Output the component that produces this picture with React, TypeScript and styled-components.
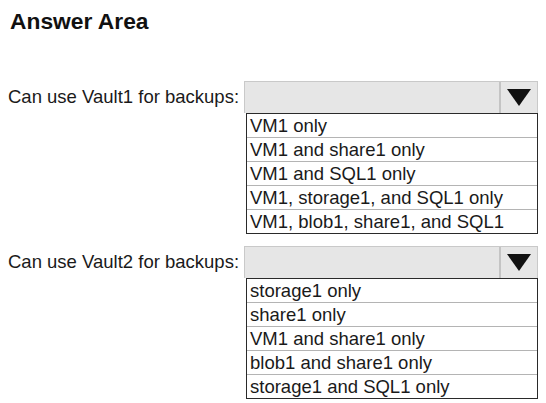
import React from "react";
import styled, { createGlobalStyle } from "styled-components";

const Global = createGlobalStyle`
  html, body { margin: 0; padding: 0; background: #ffffff; }
  body { font-family: "Liberation Sans", Arial, sans-serif; color: #1a1a1a; }
`;

const Page = styled.div`
  width: 546px;
  height: 403px;
  padding: 8px 0 0 8px;
  box-sizing: border-box;
  overflow: hidden;
`;

const Title = styled.h1`
  margin: 0 0 0 2px;
  font-size: 22.8px;
  line-height: 26px;
  font-weight: 700;
  color: #111;
`;

const Questions = styled.div`
  display: flex;
  flex-direction: column;
  gap: 12px;
  margin-top: 47px;
`;

const Row = styled.div`
  display: grid;
  grid-template-columns: 236px 294px;
  align-items: start;
`;

const Label = styled.div`
  height: 32px;
  display: flex;
  align-items: center;
  font-size: 18.5px;
  white-space: nowrap;
`;

const Dropdown = styled.div`
  display: flex;
  flex-direction: column;
`;

const Select = styled.div`
  height: 32px;
  box-sizing: border-box;
  display: flex;
  background: #e6e6e6;
  border: 1px solid #c9c9c9;
  border-bottom: none;
`;

const SelectValue = styled.div`
  flex: 1;
`;

const ArrowButton = styled.div`
  width: 36px;
  border-left: 2px solid #c4c4c4;
  display: flex;
  align-items: center;
  justify-content: center;
`;

const List = styled.div`
  margin-left: 2px;
  border: 1px solid #2a2a2a;
  display: flex;
  flex-direction: column;
`;

const Option = styled.div`
  height: 23px;
  line-height: 24px;
  padding-left: 3px;
  font-size: 18.5px;
  white-space: nowrap;
  & + & {
    border-top: 1px solid #b4b4b4;
  }
`;

const Arrow = () => (
  <svg width="24" height="17" viewBox="0 0 24 17">
    <polygon points="0,0 24,0 12,17" fill="#111" />
  </svg>
);

const questions = [
  {
    label: "Can use Vault1 for backups:",
    options: [
      "VM1 only",
      "VM1 and share1 only",
      "VM1 and SQL1 only",
      "VM1, storage1, and SQL1 only",
      "VM1, blob1, share1, and SQL1",
    ],
  },
  {
    label: "Can use Vault2 for backups:",
    options: [
      "storage1 only",
      "share1 only",
      "VM1 and share1 only",
      "blob1 and share1 only",
      "storage1 and SQL1 only",
    ],
  },
];

export default function App() {
  return (
    <Page>
      <Global />
      <Title>Answer Area</Title>
      <Questions>
        {questions.map((q) => (
          <Row key={q.label}>
            <Label>{q.label}</Label>
            <Dropdown>
              <Select>
                <SelectValue />
                <ArrowButton>
                  <Arrow />
                </ArrowButton>
              </Select>
              <List>
                {q.options.map((o) => (
                  <Option key={o}>{o}</Option>
                ))}
              </List>
            </Dropdown>
          </Row>
        ))}
      </Questions>
    </Page>
  );
}
